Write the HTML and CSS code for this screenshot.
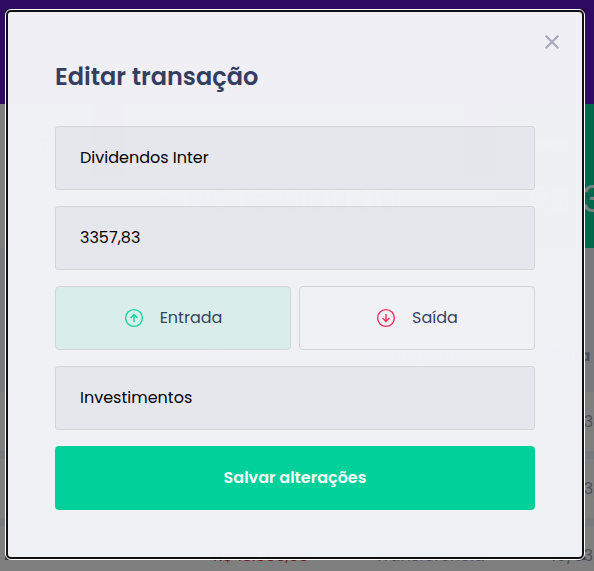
FILE: index.html
```html
<!DOCTYPE html>
<html lang="pt-BR">
<head>
<meta charset="utf-8">
<meta name="viewport" content="width=device-width, initial-scale=1">
<title>Editar transação</title>
<link rel="stylesheet" href="styles.css">
</head>
<body>
<div class="page" aria-hidden="true">
  <header class="header"></header>
  <main class="content">
    <section class="summary">
      <article class="card">
        <p class="card-head card-head-end">
          <svg class="card-icon" viewBox="0 0 32 32" fill="none" stroke="#12a454" stroke-width="2"><circle cx="16" cy="16" r="14"/><path d="M16 22V10M11 15l5-5 5 5"/></svg>
        </p>
      </article>
      <article class="card">
        <p class="card-head">Saídas</p>
        <strong class="card-value">- R$ 15.000,00</strong>
      </article>
      <article class="card card-total">
        <p class="card-head">Total</p>
        <strong class="card-value">R$ 3.357,83</strong>
      </article>
    </section>
    <table class="transactions">
      <colgroup><col class="col-title"><col class="col-value"><col class="col-category"><col class="col-date"></colgroup>
      <thead><tr><th></th><th>Valor</th><th>Categoria</th><th>Data</th></tr></thead>
      <tbody>
        <tr><td></td><td></td><td></td><td>15/03/2022</td></tr>
        <tr><td></td><td></td><td></td><td>15/03/2022</td></tr>
        <tr><td></td><td class="expense">R$ 10.000,00</td><td>Transferência</td><td>15/03/2022</td></tr>
      </tbody>
    </table>
  </main>
</div>

<div class="overlay">
  <div class="modal" role="dialog" aria-modal="true" aria-labelledby="modal-title">
    <button class="close" type="button" aria-label="Fechar">
      <svg viewBox="0 0 14 14" fill="none" stroke="#a8aab4" stroke-width="2"><path d="M.7.7l12.6 12.6M13.3.7L.7 13.3"/></svg>
    </button>
    <form class="form">
      <h2 class="title" id="modal-title">Editar transação</h2>
      <input class="field" type="text" aria-label="Título" value="Dividendos Inter">
      <input class="field" type="text" aria-label="Valor" value="3357,83">
      <div class="types">
        <button class="type type-active" type="button">
          <svg viewBox="0 0 20 20" fill="none" stroke="#12d4a0" stroke-width="1.4"><circle cx="10" cy="10" r="8.4"/><path d="M10 14V6.6M6.6 10L10 6.6l3.4 3.4"/></svg>
          <span>Entrada</span>
        </button>
        <button class="type" type="button">
          <svg viewBox="0 0 20 20" fill="none" stroke="#f5305a" stroke-width="1.4"><circle cx="10" cy="10" r="8.4"/><path d="M10 6v7.4M6.6 10l3.4 3.4 3.4-3.4"/></svg>
          <span>Saída</span>
        </button>
      </div>
      <input class="field" type="text" aria-label="Categoria" value="Investimentos">
      <button class="submit" type="submit">Salvar alterações</button>
    </form>
  </div>
</div>
</body>
</html>
```
FILE: styles.css
```css
* {
  box-sizing: border-box;
  margin: 0;
  padding: 0;
}

body,
button,
input {
  font-family: Poppins, Inter, sans-serif;
  font-size: 16px;
}

body {
  min-height: 100vh;
  overflow: hidden;
  background: #f0f2f5;
  color: #363f5f;
}

/* Dashboard behind the dialog */
.page {
  height: 100vh;
  overflow: hidden;
}

.header {
  height: 176px;
  background: #5c14c0;
}

.content {
  width: 1084px;
  margin: -72px 0 0 -248px;
}

.summary {
  display: grid;
  grid-template-columns: repeat(3, 1fr);
  gap: 32px;
}

.card {
  height: 144px;
  padding: 24px 32px;
  background: #fff;
  color: #969cb3;
}

.card-total {
  background: #00d299;
  color: #fff;
}

.card-head {
  display: flex;
  align-items: center;
  height: 32px;
}

.card-head-end {
  justify-content: flex-end;
}

.card-icon {
  width: 32px;
  height: 32px;
}

.card-value {
  display: block;
  margin-top: 16px;
  font-size: 36px;
  font-weight: 400;
  line-height: 48px;
}

.transactions {
  width: 100%;
  margin-top: 64px;
  table-layout: fixed;
  border-spacing: 0 8px;
}

.col-title {
  width: 429px;
}

.col-value {
  width: 162px;
}

.col-category {
  width: 176px;
}

.transactions th {
  height: 64px;
  padding: 6px 32px 0;
  text-align: left;
  font-weight: 600;
  color: #969cb3;
}

.transactions td {
  height: 59px;
  padding: 0 32px;
  background: #fff;
  white-space: nowrap;
  color: #969cb3;
}

.transactions .expense {
  color: #e52e4d;
}

/* Dialog */
.overlay {
  position: fixed;
  inset: 0;
  display: flex;
  align-items: flex-start;
  justify-content: center;
  padding: 10px 10px 12px 6px;
  background: rgba(0, 0, 0, 0.5);
}

.modal {
  position: relative;
  width: 100%;
  max-width: 578px;
  padding: 47px;
  border: 2px solid #101010;
  border-radius: 5px;
  outline: 1px solid #fff;
  background: #f2f3f7;
  opacity: 0.985;
}

.close {
  position: absolute;
  top: 23px;
  right: 23px;
  width: 14px;
  height: 14px;
  border: 0;
  background: none;
}

.close svg {
  display: block;
}

.form {
  display: flex;
  flex-direction: column;
  gap: 16px;
}

.title {
  margin-bottom: 16px;
  font-size: 24px;
  font-weight: 600;
  line-height: 35px;
}

.field {
  width: 100%;
  height: 64px;
  padding: 0 24px 2px;
  border: 1px solid #d7d7d7;
  border-radius: 3px;
  background: #e8e9ee;
  color: #000;
}

.types {
  display: grid;
  grid-template-columns: 1fr 1fr;
  gap: 8px;
}

.type {
  display: flex;
  align-items: center;
  justify-content: center;
  gap: 16px;
  height: 64px;
  border: 1px solid #d7d7d7;
  border-radius: 4px;
  background: transparent;
  color: #363f5f;
}

.type span {
  padding-bottom: 2px;
}

.type-active {
  background: #dbf0ec;
}

.type svg {
  width: 20px;
  height: 20px;
}

.submit {
  height: 64px;
  padding-bottom: 2px;
  border: 0;
  border-radius: 4px;
  background: #00d29b;
  color: #fff;
  font-weight: 600;
}
```
